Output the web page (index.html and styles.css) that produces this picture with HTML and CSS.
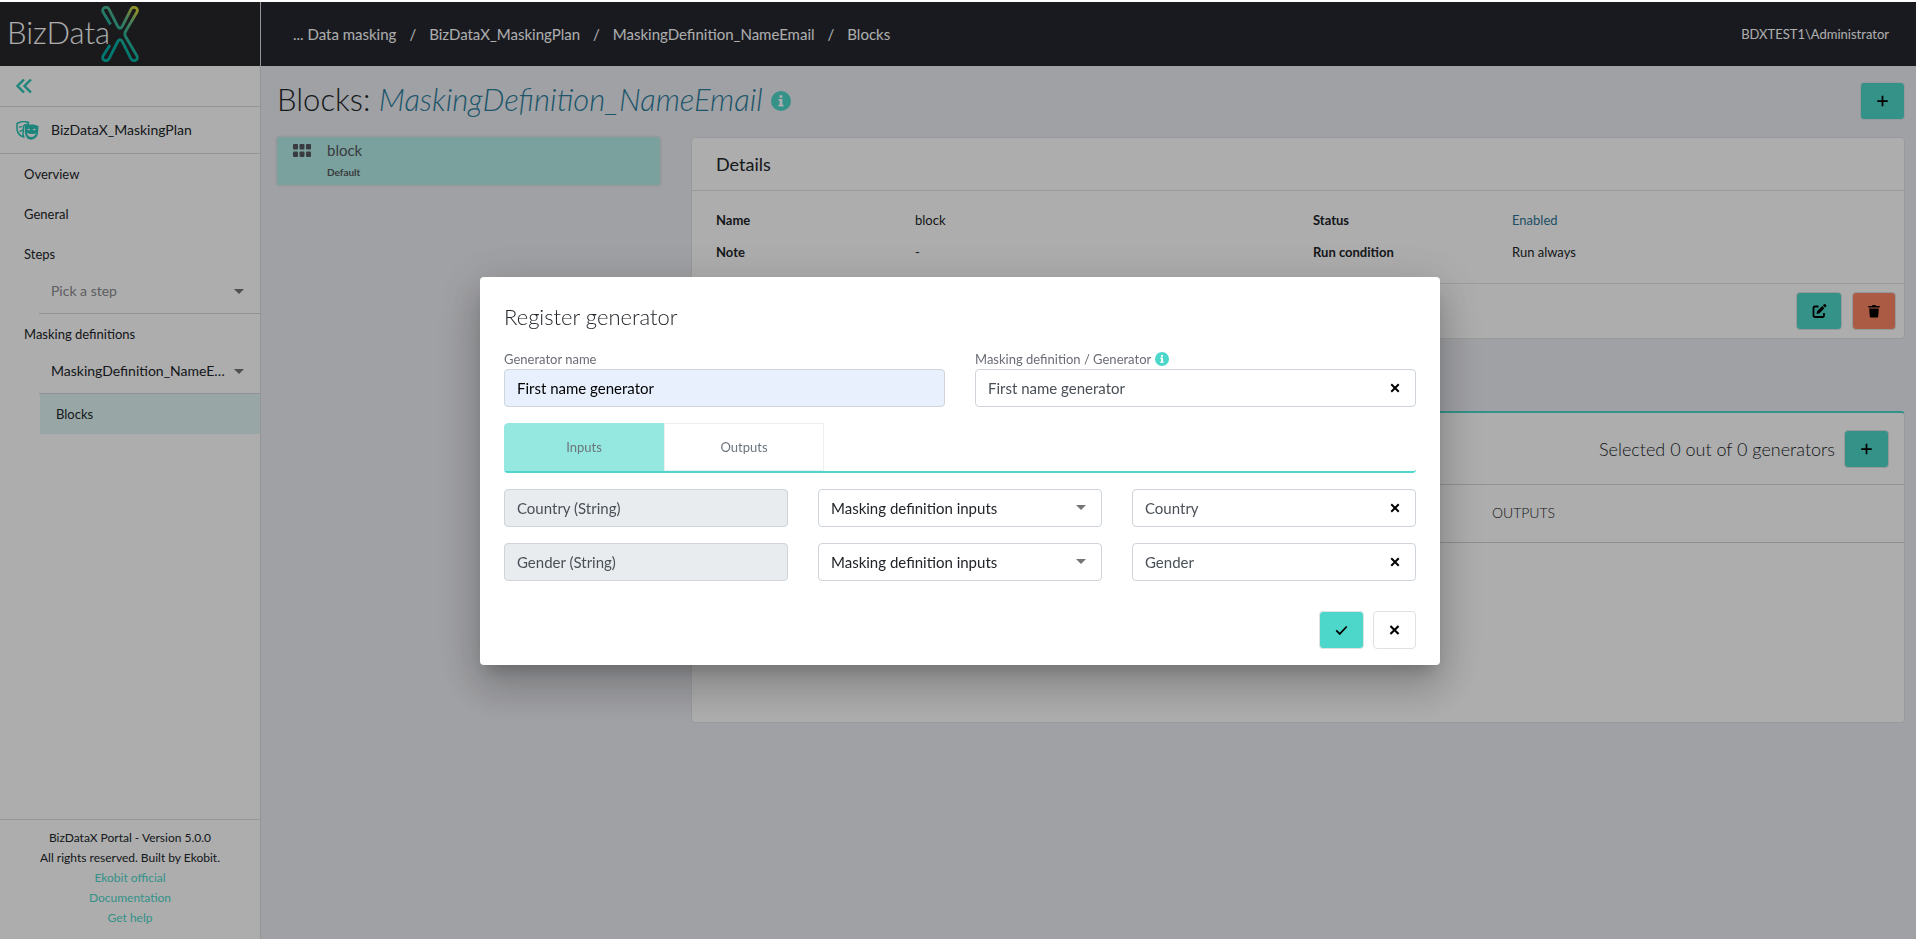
FILE: index.html
```html
<!DOCTYPE html>
<html lang="en">
<head>
<meta charset="utf-8">
<title>BizDataX Portal - Blocks</title>
<link rel="stylesheet" href="styles.css">
</head>
<body>
<svg class="defs" aria-hidden="true">
  <symbol id="i-plus" viewBox="0 0 16 16"><path d="M8 2v12M2 8h12" fill="none" stroke="currentColor" stroke-width="2"/></symbol>
  <symbol id="i-x" viewBox="0 0 16 16"><path d="M3 3l10 10M13 3L3 13" fill="none" stroke="currentColor" stroke-width="2.600"/></symbol>
  <symbol id="i-check" viewBox="0 0 16 16"><path d="M2 8.500l4 4L14 4" fill="none" stroke="currentColor" stroke-width="2"/></symbol>
  <symbol id="i-info" viewBox="0 0 16 16"><circle cx="8" cy="8" r="8" fill="currentColor"/><path class="info-mark" d="M6.900 3.300h2.200v2H6.900zM6 6.300h3.100v4.600h.9v1.500H6v-1.500h.9V7.800H6z"/></symbol>
</svg>
<div class="app">
  <aside class="side">
    <a class="logo" href="#" aria-label="BizDataX">
      <span class="logo-text">BizData</span>
      <svg class="logo-x" viewBox="0 0 38 56" aria-hidden="true">
        <defs><linearGradient id="lg" x1="1" y1="0" x2="0.5" y2="0.75"><stop offset="0" stop-color="#e6dc2e"/><stop offset=".4" stop-color="#62b98a"/><stop offset="1" stop-color="#00b2a8"/></linearGradient></defs>
        <path d="M9.500 18.500L2.200 6.300C0 2 5.500-.5 8 3.200L16.500 20C18 23 20 23 21.500 20L30 3.200C32.500-.5 38 2 35.800 6.300L24.500 25.500C23.500 27.500 23.500 28.500 24.500 30.500L35.800 49.700C38 54 32.500 56.500 30 52.800L21.500 36C20 33 18 33 16.500 36L8 52.800C5.500 56.500 0 54 2.200 49.700L9 39" fill="none" stroke="url(#lg)" stroke-width="2.800"/>
      </svg>
    </a>
    <button class="collapse" aria-label="Collapse menu"><svg width="16" height="14" viewBox="0 0 16 14"><path d="M8 0.500L1.500 7L8 13.500M15 .5L8.500 7L15 13.500" fill="none" stroke="currentColor" stroke-width="2.400"/></svg></button>
    <div class="plan">
      <svg width="23" height="19" viewBox="0 0 23 19"><path d="M1 2.500C4 .6 9 .2 12.500 1.500L12.300 3.300C10 3.400 8.300 4 7.500 5L7 13.500L7.700 16C4 15 1.600 12 1 8.500Z" fill="none" stroke="currentColor" stroke-width="1.500"/><path d="M3 6.500c1-1 2-1 3-.6M3.600 11c1-1.400 2-1.800 3.400-1.800" fill="none" stroke="currentColor" stroke-width="1.300"/><path fill="currentColor" fill-rule="evenodd" d="M8.600 5C12.500 3 19 3 22.500 5.200L22 12.500C21 16.500 18 18.700 15 18.700S9.800 16 9 12.500ZM11 8.800c1-1.400 2.300-1.400 3.300-.2-1 .8-2.300.8-3.300.2zM16.600 8.800c1-1.400 2.300-1.400 3.300-.2-1 .8-2.300.8-3.300.2zM11 12c3 1.300 6 1.400 9 .2-.8 2.400-2.500 3.700-4.700 3.700S11.500 14.500 11 12z"/></svg>
      <span>BizDataX_MaskingPlan</span>
    </div>
    <nav class="menu">
      <a href="#">Overview</a>
      <a href="#">General</a>
      <label for="step">Steps</label>
      <div class="side-select muted"><select id="step"><option>Pick a step</option></select></div>
      <label for="mdef">Masking definitions</label>
      <div class="side-select"><select id="mdef"><option>MaskingDefinition_NameEmail</option></select></div>
      <a class="sub" href="#">Blocks</a>
    </nav>
    <footer class="foot">
      <span>BizDataX Portal - Version 5.0.0</span>
      <span>All rights reserved. Built by Ekobit.</span>
      <a href="#">Ekobit official</a>
      <a href="#">Documentation</a>
      <a href="#">Get help</a>
    </footer>
  </aside>
  <div class="body">
    <header class="top">
      <nav class="crumbs"><a href="#">... Data masking</a><i>/</i><a href="#">BizDataX_MaskingPlan</a><i>/</i><a href="#">MaskingDefinition_NameEmail</a><i>/</i><a href="#">Blocks</a></nav>
      <span class="user">BDXTEST1\Administrator</span>
    </header>
    <main class="main">
      <div class="head">
        <h1>Blocks: <em>MaskingDefinition_NameEmail</em></h1>
        <svg class="info head-info"><use href="#i-info"/></svg>
        <button class="btn teal" aria-label="Add block"><svg class="w15"><use href="#i-plus"/></svg></button>
      </div>
      <div class="cols">
        <a class="block" href="#">
          <svg width="18" height="13" viewBox="0 0 18 13" fill="currentColor"><rect width="5" height="5.500" rx="1"/><rect x="6.500" width="5" height="5.500" rx="1"/><rect x="13" width="5" height="5.500" rx="1"/><rect y="7.500" width="5" height="5.500" rx="1"/><rect x="6.500" y="7.500" width="5" height="5.500" rx="1"/><rect x="13" y="7.500" width="5" height="5.500" rx="1"/></svg>
          <span class="block-name">block</span>
          <span class="block-tag">Default</span>
        </a>
        <div class="right">
          <section class="card">
            <h2>Details</h2>
            <dl class="details">
              <dt>Name</dt><dd>block</dd><dt>Status</dt><dd class="link">Enabled</dd>
              <dt>Note</dt><dd>-</dd><dt>Run condition</dt><dd>Run always</dd>
            </dl>
            <div class="card-actions">
              <button class="btn teal" aria-label="Edit"><svg class="w16" viewBox="0 0 16 16"><path d="M7.500 3.500H4A1.500 1.500 0 0 0 2.500 5v7.500A1.500 1.500 0 0 0 4 14h7.500a1.500 1.500 0 0 0 1.500-1.500V10" fill="none" stroke="currentColor" stroke-width="1.800"/><path d="M6 8.300L11.200 3.100 13.400 5.300 8.200 10.500 5.500 11zM11.900 2.400L13 1.300c.4-.4.900-.4 1.300 0l.9.900c.4.4.4.900 0 1.300L14.100 4.600z" fill="currentColor"/></svg></button>
              <button class="btn red" aria-label="Delete"><svg viewBox="0 0 16 16"><path d="M1.500 2.200h4L6.500 1h3l1 1.200h4V4h-13zM2.500 5h11l-.7 9.500a1 1 0 0 1-1 .9H4.200a1 1 0 0 1-1-.9z" fill="currentColor"/></svg></button>
            </div>
          </section>
          <section class="card gens">
            <div class="gens-head"><span>Selected 0 out of 0 generators</span><button class="btn teal" aria-label="Add generator"><svg class="w15"><use href="#i-plus"/></svg></button></div>
            <table><thead><tr><td></td><td></td><th>OUTPUTS</th></tr></thead></table>
          </section>
        </div>
      </div>
    </main>
  </div>
</div>
<div class="backdrop">
  <form class="modal" role="dialog" aria-labelledby="mt">
    <h2 id="mt">Register generator</h2>
    <div class="row two">
      <div class="field"><label for="gname">Generator name</label><input id="gname" class="auto" type="text" value="First name generator"></div>
      <div class="field"><label for="gdef">Masking definition / Generator <svg class="info"><use href="#i-info"/></svg></label>
        <div class="clearable"><input id="gdef" type="text" value="First name generator"><button type="button" aria-label="Clear generator"><svg><use href="#i-x"/></svg></button></div></div>
    </div>
    <div class="tabs"><button type="button" class="on">Inputs</button><button type="button">Outputs</button></div>
    <div class="row three">
      <input type="text" value="Country (String)" aria-label="Input" disabled>
      <div class="select"><select aria-label="Country source"><option>Masking definition inputs</option></select></div>
      <div class="clearable"><input type="text" value="Country" aria-label="Country value"><button type="button" aria-label="Clear country"><svg><use href="#i-x"/></svg></button></div>
      <input type="text" value="Gender (String)" aria-label="Input" disabled>
      <div class="select"><select aria-label="Gender source"><option>Masking definition inputs</option></select></div>
      <div class="clearable"><input type="text" value="Gender" aria-label="Gender value"><button type="button" aria-label="Clear gender"><svg><use href="#i-x"/></svg></button></div>
    </div>
    <div class="modal-actions">
      <button type="button" class="btn teal" aria-label="Confirm"><svg class="w15"><use href="#i-check"/></svg></button>
      <button type="button" class="btn plain" aria-label="Cancel"><svg class="w13"><use href="#i-x"/></svg></button>
    </div>
  </form>
</div>
</body>
</html>
```
FILE: styles.css
```css
* { box-sizing: border-box; }
body { margin: 0; font-family: Lato, "Liberation Sans", sans-serif; font-size: 13px; line-height: 20px; color: #212529; background: #ecedf2; }
h1, h2, dl, dd { margin: 0; }
h1, h2 { font-weight: 300; }
a { color: inherit; text-decoration: none; }
button, input, select { font: inherit; color: inherit; margin: 0; }
button { border: 0; background: none; padding: 0; cursor: pointer; }
svg { display: block; flex: none; }
.defs { display: none; }
.app { display: flex; min-height: 100vh; border-top: 2px solid #fff; }

.side { width: 261px; flex: none; display: flex; flex-direction: column; background: #fff; border-right: 1px solid #d9dbe0; }
.logo { height: 64px; flex: none; display: flex; align-items: center; padding-left: 7px; background: #27272b; color: #fff; }
.logo-text { font-size: 31px; font-weight: 300; line-height: 36px; padding-bottom: 4px; }
.logo-x { width: 38px; height: 56px; margin-left: -9px; }
.collapse { height: 41px; flex: none; padding-left: 16px; color: #2cc4b6; border-bottom: 1px solid #dadde1; display: flex; align-items: center; }
.plan { height: 47px; flex: none; display: flex; align-items: center; gap: 12px; padding-left: 16px; font-size: 14px; border-bottom: 1px solid #dadde1; }
.plan svg { color: #2cc4b6; }
.menu { flex: 1; display: flex; flex-direction: column; }
.menu > a, .menu > label { line-height: 40px; padding-left: 24px; }
.side-select { position: relative; margin-left: 39px; border-bottom: 1px solid #d5d8dc; height: 40px; padding-bottom: 6px; }
.side-select select { appearance: none; width: 100%; height: 34px; padding: 0 28px 0 12px; border: 0; background: none; font-size: 14px; overflow: hidden; white-space: nowrap; text-overflow: ellipsis; }
.side-select.muted select { color: #8a8c90; }
.side-select::after, .select::after { content: ""; position: absolute; right: 16px; top: 15px; border: 5px solid transparent; border-top-color: #757575; border-bottom: 0; }
.menu > .sub { margin-left: 40px; padding-left: 16px; background: #e0f7f5; }
.foot { height: 120px; flex: none; border-top: 1px solid #dadde1; padding-top: 8px; display: flex; flex-direction: column; align-items: center; font-size: 12px; }
.foot a { color: #4dd7cb; }

.body { flex: 1; min-width: 0; }
.top { height: 64px; display: flex; align-items: center; justify-content: space-between; padding: 0 27px 0 32px; background: #25272f; color: #fff; }
.crumbs { display: flex; gap: 13px; font-size: 15px; }
.crumbs i { font-style: normal; }
.main { padding: 15px 11px 16px 16px; }
.head { display: flex; align-items: center; gap: 8px; height: 40px; }
.head .btn { margin-left: auto; }
h1 { font-size: 31px; line-height: 36px; padding-bottom: 4px; }
h1 em { color: #2c7f9e; }
.info { width: 14px; height: 14px; color: #4dd7cb; }
.info-mark { fill: #fff; }
.head-info { width: 20px; height: 20px; }
.btn { height: 38px; padding: 0 14px; border-radius: 4px; display: flex; align-items: center; justify-content: center; color: #000; border: 1px solid #dee2e6; }
.btn svg { width: 14px; height: 14px; }
.btn .w13 { width: 13px; }
.btn .w15 { width: 15px; }
.btn .w16 { width: 16px; height: 16px; }
.teal { background: #4dd7cb; }
.red { background: #fd8663; }
.plain { background: #fff; }

.cols { display: grid; grid-template-columns: 383px 1fr; gap: 31px; margin-top: 16px; align-items: start; }
.block { display: grid; grid-template-columns: 18px 1fr; column-gap: 16px; align-items: center; height: 48px; padding: 0 16px 4px; background: #b4eee8; color: #55585f; border-radius: 2px; box-shadow: 0 0 3px rgba(0, 0, 0, .15); }
.block-name { font-size: 15px; line-height: 24px; }
.block-tag { grid-column: 2; font-size: 10px; line-height: 16px; font-weight: 700; }
.card { background: #fff; border: 1px solid #e2e4e8; border-radius: 4px; }
.card h2 { font-size: 18px; font-weight: 400; line-height: 52px; padding-left: 24px; border-bottom: 1px solid #e2e4e8; }
.details { display: grid; grid-template-columns: 1fr 2fr 1fr 2fr; line-height: 32px; padding: 13px 9px 15px; }
.details > * { padding: 0 15px; }
.details dt { font-weight: 700; }
.details .link { color: #2f7595; }
.card-actions { display: flex; justify-content: flex-end; gap: 10px; padding: 8px; border-top: 1px solid #e2e4e8; }
.gens { margin-top: 72px; border-top: 2px solid #4dd7cb; min-height: 312px; }
.gens-head { height: 72px; display: flex; align-items: center; justify-content: flex-end; gap: 9px; padding-right: 15px; font-size: 18px; font-weight: 300; border-bottom: 1px solid #d5d8dc; }
.gens table { width: 100%; border-collapse: collapse; }
.gens tr > * { width: 33%; height: 57px; padding: 0; border-bottom: 1px solid #ced2d6; }
.gens tr > th { width: 34%; text-align: left; font-size: 14px; font-weight: 300; }

.backdrop { position: fixed; inset: 2px 0 0; background: rgba(0, 0, 0, .32); display: flex; align-items: center; justify-content: center; padding-left: 4px; }
.modal { width: 960px; max-width: 100%; padding: 24px 24px 16px; background: #fff; border-radius: 4px; box-shadow: 0 11px 15px -7px rgba(0, 0, 0, .2), 0 24px 38px 3px rgba(0, 0, 0, .14), 0 9px 46px 8px rgba(0, 0, 0, .12); }
.modal h2 { font-size: 22px; line-height: 32px; }
.row { display: grid; column-gap: 30px; row-gap: 16px; }
.two { grid-template-columns: 1fr 1fr; margin-top: 16px; }
.three { grid-template-columns: repeat(3, 1fr); margin-top: 16px; }
.field label { display: flex; gap: 4px; align-items: center; color: #6a6d75; }
.modal input, .modal select { display: block; width: 100%; height: 38px; padding: 0 12px; font-size: 15px; border: 1px solid #ced4da; border-radius: 4px; background: #fff; color: #495057; }
.modal .auto { background: #e8f0fe; color: #000; }
.modal input:disabled { background: #e9ecef; }
.modal select { appearance: none; color: #212529; }
.select, .clearable { position: relative; }
.select::after { top: 16px; }
.clearable button { position: absolute; right: 15px; top: 13px; color: #000; }
.clearable svg { width: 12px; height: 12px; }
.tabs { display: flex; margin-top: 16px; height: 50px; border-bottom: 2px solid #4dd7cb; border-radius: 4px; }
.tabs button { width: 160px; border: 1px solid #eceeef; color: #6c757d; }
.tabs .on { background: #95e8df; border-color: #95e8df; border-top-left-radius: 4px; }
.modal-actions { display: flex; justify-content: flex-end; gap: 9px; margin-top: 30px; }
```
